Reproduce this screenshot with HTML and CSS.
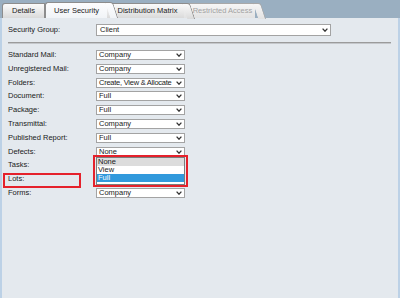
FILE: index.html
```html
<!DOCTYPE html>
<html lang="en">
<head>
    <meta charset="UTF-8">
    <title>User Security</title>
    <link rel="stylesheet" href="styles.css">
</head>
<body>
    <div class="tabbar">
        <div class="tab tab-details">Details</div>
        <div class="tab tab-slant tab-active">User Security</div>
        <div class="tab tab-slant tab-matrix">Distribution Matrix</div>
        <div class="tab tab-slant tab-disabled">Restricted Access</div>
    </div>

    <div class="panel">
        <div class="group-row">
            <span class="label">Security Group:</span>
            <div class="select select-wide"><span>Client</span><svg class="chev" viewBox="0 0 6 4"><path d="M0.6 0.6 L3 3.2 L5.4 0.6"/></svg></div>
        </div>

        <div class="rule"></div>

        <div class="rights">
            <div class="row">
                <span class="label">Standard Mail:</span>
                <div class="select"><span>Company</span><svg class="chev" viewBox="0 0 6 4"><path d="M0.6 0.6 L3 3.2 L5.4 0.6"/></svg></div>
            </div>
            <div class="row">
                <span class="label">Unregistered Mail:</span>
                <div class="select"><span>Company</span><svg class="chev" viewBox="0 0 6 4"><path d="M0.6 0.6 L3 3.2 L5.4 0.6"/></svg></div>
            </div>
            <div class="row">
                <span class="label">Folders:</span>
                <div class="select"><span class="tight">Create, View &amp; Allocate</span><svg class="chev" viewBox="0 0 6 4"><path d="M0.6 0.6 L3 3.2 L5.4 0.6"/></svg></div>
            </div>
            <div class="row">
                <span class="label">Document:</span>
                <div class="select"><span>Full</span><svg class="chev" viewBox="0 0 6 4"><path d="M0.6 0.6 L3 3.2 L5.4 0.6"/></svg></div>
            </div>
            <div class="row">
                <span class="label">Package:</span>
                <div class="select"><span>Full</span><svg class="chev" viewBox="0 0 6 4"><path d="M0.6 0.6 L3 3.2 L5.4 0.6"/></svg></div>
            </div>
            <div class="row">
                <span class="label">Transmittal:</span>
                <div class="select"><span>Company</span><svg class="chev" viewBox="0 0 6 4"><path d="M0.6 0.6 L3 3.2 L5.4 0.6"/></svg></div>
            </div>
            <div class="row">
                <span class="label">Published Report:</span>
                <div class="select"><span>Full</span><svg class="chev" viewBox="0 0 6 4"><path d="M0.6 0.6 L3 3.2 L5.4 0.6"/></svg></div>
            </div>
            <div class="row">
                <span class="label">Defects:</span>
                <div class="select select-open"><span>None</span><svg class="chev" viewBox="0 0 6 4"><path d="M0.6 0.6 L3 3.2 L5.4 0.6"/></svg>
                    <div class="callout callout-list">
                        <div class="listbox">
                            <div class="option option-hover">None</div>
                            <div class="option">View</div>
                            <div class="option option-selected">Full</div>
                        </div>
                    </div>
                </div>
            </div>
            <div class="row">
                <span class="label">Tasks:</span>
            </div>
            <div class="row">
                <span class="label">Lots:</span>
                <div class="callout callout-label"></div>
            </div>
            <div class="row">
                <span class="label">Forms:</span>
                <div class="select"><span>Company</span><svg class="chev" viewBox="0 0 6 4"><path d="M0.6 0.6 L3 3.2 L5.4 0.6"/></svg></div>
            </div>
        </div>
    </div>
</body>
</html>
```

FILE: styles.css
```css
:root {
    --strip-color: #9aafc1;
    --panel-bg: #e4e9ee;
    --panel-edge: #bcd1e6;
    --text-color: #1a1a1a;
    --tab-border: #8d8d8d;
    --field-border: #a3a3a3;
    --mark-color: #e5212b;
    --pick-color: #3199dc;
}

html, body {
    margin: 0;
    padding: 0;
    height: 100%;
}

body {
    width: 400px;
    height: 298px;
    display: flex;
    flex-direction: column;
    font-family: 'Liberation Sans', Arial, sans-serif;
    font-size: 7.5px;
    color: var(--text-color);
    background: var(--panel-bg);
    overflow: hidden;
}

/* tab strip */

.tabbar {
    height: 18px;
    flex-shrink: 0;
    display: flex;
    align-items: flex-end;
    padding-left: 2px;
    background: var(--strip-color);
    box-sizing: border-box;
}

.tab {
    position: relative;
    height: 15px;
    line-height: 14px;
    text-align: center;
    box-sizing: border-box;
    border: 1px solid var(--tab-border);
    border-bottom: none;
    border-radius: 3px 0 0 0;
    background: linear-gradient(#fbfbfb, #dadada);
    white-space: nowrap;
}

.tab-slant {
    border-right: none;
}

.tab-slant::after {
    content: "";
    position: absolute;
    top: -1px;
    right: -6px;
    width: 8px;
    height: 16px;
    box-sizing: border-box;
    border-top: 1px solid var(--tab-border);
    border-right: 1px solid var(--tab-border);
    border-radius: 0 3px 0 0;
    background: inherit;
    transform: skewX(18deg);
    transform-origin: top left;
}

.tab-details {
    width: 43px;
}

.tab-active {
    width: 62px;
    height: 16px;
    line-height: 15px;
    z-index: 3;
    background: linear-gradient(#fdfdfe, #f1f4f7);
}

.tab-matrix {
    width: 80px;
    margin-left: -3px;
    padding-left: 6px;
    z-index: 2;
}

.tab-disabled {
    width: 74px;
    margin-left: -3px;
    padding-left: 8px;
    z-index: 1;
    color: #a2a2a2;
    background: linear-gradient(#f6f6f6, #e2e2e2);
    border-color: #a8a8a8;
}

.tab-disabled::after {
    border-color: #a8a8a8;
}

/* panel */

.panel {
    flex: 1;
    padding: 6px 6px 0 6px;
    border-left: 2px solid var(--panel-edge);
    border-right: 2px solid var(--panel-edge);
    background: var(--panel-bg);
}

.label {
    display: inline-block;
    width: 88px;
    flex-shrink: 0;
    line-height: 10px;
}

.group-row {
    display: flex;
    align-items: center;
    height: 12px;
}

.group-row .label {
    line-height: 12px;
}

.select {
    position: relative;
    width: 89px;
    height: 10px;
    box-sizing: border-box;
    border: 1px solid var(--field-border);
    background: #ffffff;
    display: flex;
    align-items: center;
    padding-left: 2px;
    line-height: 8px;
    white-space: nowrap;
}

.tight {
    letter-spacing: -0.25px;
}

.select-wide {
    width: 235px;
    height: 12px;
    padding-left: 3px;
}

.chev {
    position: absolute;
    right: 2px;
    top: 50%;
    width: 6px;
    height: 4px;
    margin-top: -2px;
    fill: none;
    stroke: #333333;
    stroke-width: 1.3;
    background: #ffffff;
}

.rule {
    margin: 6px 0 0 0;
    width: 383px;
    height: 1px;
    background: #9b9b9b;
    border-bottom: 1px solid #c4c7cb;
}

.rights {
    margin-top: 6px;
}

.row {
    position: relative;
    display: flex;
    align-items: flex-start;
    height: 13.8px;
}

/* open dropdown */

.callout {
    position: absolute;
    box-sizing: border-box;
    border: 2px solid var(--mark-color);
}

.callout-list {
    top: calc(100% - 1px);
    left: -4px;
    padding: 0 1px;
    z-index: 5;
}

.listbox {
    width: 89px;
    box-sizing: border-box;
    border: 1px solid #7c7c7c;
    background: #ffffff;
    padding-bottom: 2px;
}

.option {
    height: 8px;
    line-height: 8px;
    padding-left: 1px;
}

.option-hover {
    background: #dcdcdc;
}

.option-selected {
    background: var(--pick-color);
    color: #ffffff;
}

.callout-label {
    left: -5px;
    top: -1.5px;
    width: 78px;
    height: 15px;
}
```
